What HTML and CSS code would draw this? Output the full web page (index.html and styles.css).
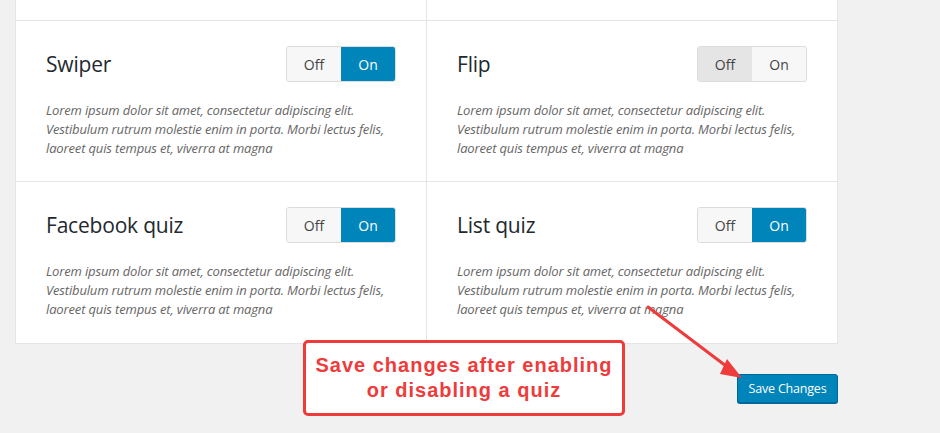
FILE: index.html
```html
<!DOCTYPE html>
<html lang="en">
<head>
    <meta charset="UTF-8">
    <title>Quiz types</title>
    <link rel="stylesheet" href="styles.css">
</head>
<body>
    <div class="page">
        <div class="panel">
            <div class="cell tail"></div>
            <div class="cell tail"></div>

            <div class="cell">
                <div class="cell-head">
                    <h2>Swiper</h2>
                    <div class="toggle">
                        <span class="opt">Off</span>
                        <span class="opt on">On</span>
                    </div>
                </div>
                <p class="desc">Lorem ipsum dolor sit amet, consectetur adipiscing elit. Vestibulum rutrum molestie enim in porta. Morbi lectus felis, laoreet quis tempus et, viverra at magna</p>
            </div>
            <div class="cell">
                <div class="cell-head">
                    <h2>Flip</h2>
                    <div class="toggle">
                        <span class="opt off">Off</span>
                        <span class="opt">On</span>
                    </div>
                </div>
                <p class="desc">Lorem ipsum dolor sit amet, consectetur adipiscing elit. Vestibulum rutrum molestie enim in porta. Morbi lectus felis, laoreet quis tempus et, viverra at magna</p>
            </div>

            <div class="cell last">
                <div class="cell-head">
                    <h2>Facebook quiz</h2>
                    <div class="toggle">
                        <span class="opt">Off</span>
                        <span class="opt on">On</span>
                    </div>
                </div>
                <p class="desc">Lorem ipsum dolor sit amet, consectetur adipiscing elit. Vestibulum rutrum molestie enim in porta. Morbi lectus felis, laoreet quis tempus et, viverra at magna</p>
            </div>
            <div class="cell last">
                <div class="cell-head">
                    <h2>List quiz</h2>
                    <div class="toggle">
                        <span class="opt">Off</span>
                        <span class="opt on">On</span>
                    </div>
                </div>
                <p class="desc">Lorem ipsum dolor sit amet, consectetur adipiscing elit. Vestibulum rutrum molestie enim in porta. Morbi lectus felis, laoreet quis tempus et, viverra at magna</p>
            </div>
        </div>

        <div class="footer">
            <button class="save">Save Changes</button>
        </div>

        <!-- annotation drawn over the screenshot -->
        <div class="note">Save changes after enabling<br>or disabling a quiz</div>
        <svg class="arrow" width="120" height="90" viewBox="0 0 120 90">
            <line x1="8" y1="7" x2="90" y2="69" stroke="#ee3b3b" stroke-width="3" stroke-linecap="round"/>
            <polygon points="102,78 87,59 80,74" fill="#ee3b3b"/>
        </svg>
    </div>
</body>
</html>
```

FILE: styles.css
```css
body {
    margin: 0;
    background: #f1f1f1;
    font-family: "Open Sans", "Noto Sans", sans-serif;
    color: #23282d;
}

.page {
    position: relative;
    width: 940px;
    height: 433px;
    padding-left: 15px;
    box-sizing: border-box;
    overflow: hidden;
}

.panel {
    width: 823px;
    box-sizing: border-box;
    background: #fff;
    border: 1px solid #e5e5e5;
    border-top: none;
    display: grid;
    grid-template-columns: 411px 410px;
}

.cell {
    height: 161px;
    padding: 25px 30px 0 30px;
    box-sizing: border-box;
    border-bottom: 1px solid #e5e5e5;
}

.cell:nth-child(odd) {
    border-right: 1px solid #e5e5e5;
}

.cell.last {
    height: 161px;
    border-bottom: none;
}

.cell.tail {
    height: 21px;
    padding: 0;
}

.cell-head {
    display: flex;
    align-items: center;
    justify-content: space-between;
}

h2 {
    margin: 0;
    font-size: 21px;
    font-weight: 400;
    color: #23282d;
    letter-spacing: -0.2px;
}

.toggle {
    display: flex;
    height: 36px;
    border: 1px solid #dcdcdc;
    border-radius: 3px;
    overflow: hidden;
    box-sizing: border-box;
}

.opt {
    width: 54px;
    display: flex;
    align-items: center;
    justify-content: center;
    font-size: 14px;
    color: #444;
    background: #f7f7f7;
}

.opt.on {
    background: #0085ba;
    color: #fff;
}

.opt.off {
    background: #e5e5e5;
}

.desc {
    margin: 19px 0 0 0;
    font-size: 13px;
    line-height: 19px;
    font-style: italic;
    color: #666;
    letter-spacing: -0.15px;
}

.footer {
    width: 823px;
    display: flex;
    justify-content: flex-end;
    padding-top: 30px;
}

.save {
    height: 29px;
    width: 101px;
    padding: 0;
    background: #0085ba;
    border: 1px solid #006799;
    border-radius: 3px;
    box-shadow: 0 1px 0 #006799;
    color: #fff;
    font-family: "Open Sans", sans-serif;
    font-size: 12.5px;
    letter-spacing: -0.2px;
}

.note {
    position: absolute;
    left: 303px;
    top: 340px;
    width: 322px;
    height: 76px;
    box-sizing: border-box;
    border: 3px solid #ee3b3b;
    border-radius: 5px;
    background: #fff;
    color: #ee3b3b;
    font-family: "Liberation Sans", Arial, sans-serif;
    font-weight: 700;
    font-size: 20px;
    line-height: 25px;
    letter-spacing: 1px;
    text-align: center;
    padding-top: 10px;
}

.arrow {
    position: absolute;
    left: 640px;
    top: 300px;
}
```
